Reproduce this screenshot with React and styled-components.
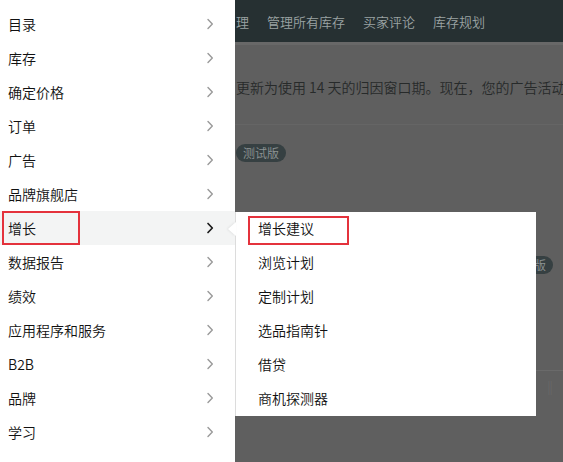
import styled, { createGlobalStyle } from "styled-components";

const GlobalStyle = createGlobalStyle`
  html, body {
    margin: 0;
    padding: 0;
    width: 563px;
    height: 462px;
    overflow: hidden;
    background: #5f5f5f;
  }
  body {
    font-family: "Noto Sans CJK SC", "Noto Sans", sans-serif;
    font-weight: 350;
  }
`;

const menuItems = [
  "目录",
  "库存",
  "确定价格",
  "订单",
  "广告",
  "品牌旗舰店",
  "增长",
  "数据报告",
  "绩效",
  "应用程序和服务",
  "B2B",
  "品牌",
  "学习",
];

const subItems = ["增长建议", "浏览计划", "定制计划", "选品指南针", "借贷", "商机探测器"];

const Chevron = ({ active }) => (
  <ChevronIcon width="8" height="12" viewBox="0 0 8 12">
    <path
      d="M2 1.5 L6.3 6 L2 10.5"
      fill="none"
      stroke={active ? "#1b1b1b" : "#9a9a9a"}
      strokeWidth={active ? 1.7 : 1.4}
      strokeLinecap="round"
      strokeLinejoin="round"
    />
  </ChevronIcon>
);

const App = () => {
  return (
    <>
      <GlobalStyle />
      <Page>
        <SideMenu>
          {menuItems.map((item) => (
            <MenuRow key={item} active={item === "增长"}>
              <span>{item}</span>
              <Chevron active={item === "增长"} />
              {item === "增长" && <Highlight style={{ left: 2, width: 78 }} />}
            </MenuRow>
          ))}
        </SideMenu>

        <Backdrop>
          <TopBar>
            <NavText>理</NavText>
            <NavText>管理所有库存</NavText>
            <NavText>买家评论</NavText>
            <NavText>库存规划</NavText>
          </TopBar>
          <Notice>更新为使用 14 天的归因窗口期。现在，您的广告活动</Notice>
          <Divider />
          <BadgeRow>
            <Badge>测试版</Badge>
          </BadgeRow>
          <BadgeRow right>
            <Badge>测试版</Badge>
          </BadgeRow>
          <FooterLine />
          <Bars>‖</Bars>
        </Backdrop>

        <Flyout>
          <Notch />
          <SubList>
            {subItems.map((item) => (
              <SubRow key={item}>
                {item}
                {item === "增长建议" && <Highlight style={{ left: 12, width: 101, top: 5 }} />}
              </SubRow>
            ))}
          </SubList>
        </Flyout>
      </Page>
    </>
  );
};

const Page = styled.div`
  position: relative;
  display: grid;
  grid-template-columns: 235px 1fr;
  width: 563px;
  height: 462px;
  overflow: hidden;
`;

const SideMenu = styled.div`
  background: #ffffff;
  padding-top: 7px;
  display: flex;
  flex-direction: column;
`;

const MenuRow = styled.div`
  position: relative;
  height: 34px;
  display: flex;
  align-items: center;
  justify-content: space-between;
  padding: 0 21px 0 8px;
  font-size: 14px;
  color: #111111;
  background: ${(p) => (p.active ? "#f3f4f4" : "transparent")};
`;

const ChevronIcon = styled.svg`
  display: block;
`;

const Highlight = styled.div`
  position: absolute;
  top: 0;
  bottom: 0;
  border: 2px solid #e4323c;
  box-sizing: border-box;
  pointer-events: none;
`;

const Backdrop = styled.div`
  background: #5f5f5f;
  display: flex;
  flex-direction: column;
  overflow: hidden;
`;

const TopBar = styled.div`
  height: 42px;
  background: #263032;
  border-bottom: 3px solid #686868;
  display: flex;
  align-items: center;
  gap: 18px;
  padding-left: 1px;
`;

const NavText = styled.span`
  font-size: 13px;
  color: #9ba3a3;
  white-space: nowrap;
`;

const Notice = styled.div`
  margin-top: 32px;
  padding-left: 1px;
  font-size: 14px;
  color: #272a2a;
  white-space: nowrap;
  overflow: hidden;
`;

const Divider = styled.div`
  margin-top: 27px;
  height: 1px;
  background: #656565;
`;

const BadgeRow = styled.div`
  display: flex;
  justify-content: ${(p) => (p.right ? "flex-end" : "flex-start")};
  margin-top: ${(p) => (p.right ? "94px" : "19px")};
  padding-right: ${(p) => (p.right ? "10px" : "0")};
  padding-left: 1px;
`;

const Badge = styled.span`
  display: inline-block;
  height: 18px;
  line-height: 18px;
  padding: 0 7px;
  border-radius: 9px;
  background: #364042;
  color: #8e9595;
  font-size: 12px;
`;

const FooterLine = styled.div`
  margin-top: 96px;
  height: 1px;
  background: #6a6a6a;
`;

const Bars = styled.div`
  margin-top: 6px;
  padding-left: 308px;
  font-size: 14px;
  color: #6e6e6e;
`;

const Flyout = styled.div`
  position: absolute;
  left: 235px;
  top: 212px;
  width: 301px;
  height: 204px;
  background: #ffffff;
  border-left: 1px solid #dcdcdc;
  box-sizing: border-box;
`;

const SubList = styled.div`
  display: flex;
  flex-direction: column;
  margin-top: -1px;
`;

const Notch = styled.div`
  position: absolute;
  left: -8px;
  top: 10px;
  width: 0;
  height: 0;
  border-top: 7px solid transparent;
  border-bottom: 7px solid transparent;
  border-right: 8px solid #ffffff;
  filter: drop-shadow(-1px 0 1px rgba(0, 0, 0, 0.08));
`;

const SubRow = styled.div`
  position: relative;
  height: 34px;
  display: flex;
  align-items: center;
  padding-left: 22px;
  font-size: 14px;
  color: #111111;
`;

export default App;
